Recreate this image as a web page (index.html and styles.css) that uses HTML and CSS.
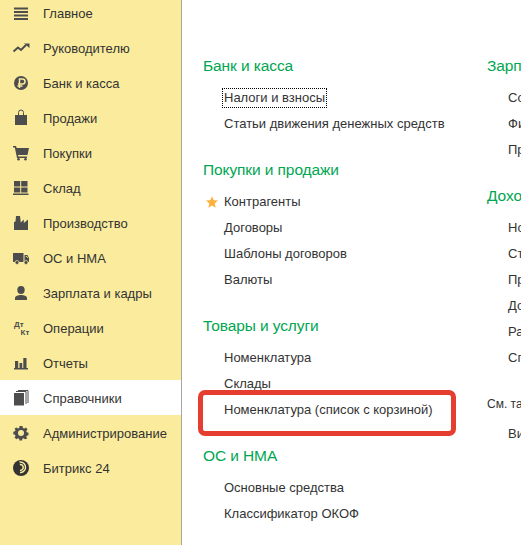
FILE: index.html
```html
<!DOCTYPE html>
<html lang="ru">
<head>
  <meta charset="UTF-8">
  <title>Справочники</title>
  <link rel="stylesheet" href="styles.css">
</head>
<body>
  <div class="page">
    <nav class="sidebar">
      <a class="nav-item">
        <svg class="icon" viewBox="0 0 20 20"><path d="M3 4.500h14v2H3zM3 8h14v2H3zM3 11.500h14v2H3zM3 15h14v2H3z"/></svg>
        <span>Главное</span>
      </a>
      <a class="nav-item">
        <svg class="icon" viewBox="0 0 20 20"><path class="line" d="M2.500 13.500 7 9.500l3 2.500 5-5"/><path d="M13 5.500h5.500V10z"/></svg>
        <span>Руководителю</span>
      </a>
      <a class="nav-item">
        <svg class="icon" viewBox="0 0 20 20"><circle cx="10" cy="10" r="7"/><path class="cut" d="M8.500 15V6h3a2.300 2.300 0 0 1 0 5h-4.500M6.500 13h5"/></svg>
        <span>Банк и касса</span>
      </a>
      <a class="nav-item">
        <svg class="icon" viewBox="0 0 20 20"><path d="M4 7h3V9h1V7h4v2h1V7h3v10H4z"/><path class="line-thin" d="M7.500 9V4.500a2.500 2.500 0 0 1 5 0V9"/></svg>
        <span>Продажи</span>
      </a>
      <a class="nav-item">
        <svg class="icon" viewBox="0 0 20 20"><path d="M2 3h3l.7 2H18l-1.500 7H7l.4 1.500H16V15H6L3.800 4.500H2z"/><circle cx="7.500" cy="16.300" r="1.300"/><circle cx="14.500" cy="16.300" r="1.300"/></svg>
        <span>Покупки</span>
      </a>
      <a class="nav-item">
        <svg class="icon" viewBox="0 0 20 20"><path d="M3 3h6.200v5.500H3zM10.200 3H16.500v5.500h-6.300zM3 9.500h6.200v5H3zM10.200 9.500H16.500v5h-6.300zM2 15.500h15.500V17H2z"/></svg>
        <span>Склад</span>
      </a>
      <a class="nav-item">
        <svg class="icon" viewBox="0 0 20 20"><path d="M3 17V9l1.500-.5L5 3h4l.8 6.500 3-3v3.500l4.200-3.500V17z"/></svg>
        <span>Производство</span>
      </a>
      <a class="nav-item">
        <svg class="icon" viewBox="0 0 20 20"><path d="M2 5h10.500v9H2zM13.500 7h3L18 10v4h-4.500z"/><path class="cut-thin" d="M14.800 8.500h1.200l.8 1.500"/><circle class="wheel" cx="6" cy="14.500" r="2"/><circle class="wheel" cx="15" cy="14.500" r="2"/></svg>
        <span>ОС и НМА</span>
      </a>
      <a class="nav-item">
        <svg class="icon" viewBox="0 0 20 20"><ellipse cx="10" cy="7" rx="3.700" ry="4"/><path d="M4 17v-2c0-2 3-3 6-3s6 1 6 3v2z"/></svg>
        <span>Зарплата и кадры</span>
      </a>
      <a class="nav-item">
        <svg class="icon" viewBox="0 0 20 20"><text class="icon-text" x="3" y="8.500">Дт</text><text class="icon-text" x="9.500" y="16.500">Кт</text></svg>
        <span>Операции</span>
      </a>
      <a class="nav-item">
        <svg class="icon" viewBox="0 0 20 20"><path d="M4 8h3.200v7H4zM8.500 10h2.700v5H8.500zM12.300 5h3.200v10h-3.200zM3 15h14v1.500H3z"/></svg>
        <span>Отчеты</span>
      </a>
      <a class="nav-item active">
        <svg class="icon" viewBox="0 0 20 20"><path d="M3 5h10v12.500H3z"/><path class="line-thin" d="M5 3.500h10v12.500M7 2.500h10v12.500"/></svg>
        <span>Справочники</span>
      </a>
      <a class="nav-item">
        <svg class="icon" viewBox="0 0 20 20"><path fill-rule="evenodd" d="M8.500 3h3l.4 1.900 1.500.6L15 4.500 16.500 6.500l-1.200 1.500.5 1.200 1.700.5v2.600l-1.700.5-.5 1.200 1 1.600L14 16.300l-1.600-1-1 .5-.4 1.700H8.500l-.4-1.700-1.200-.5-1.500 1L3.500 14.600l1-1.600-.5-1.200-1.700-.5V8.700l1.700-.5.5-1.200-1-1.500L5.500 4.500l1.500 1 1.200-.5zM10 7a3 3 0 1 0 0 6 3 3 0 0 0 0-6z"/></svg>
        <span>Администрирование</span>
      </a>
      <a class="nav-item">
        <svg class="icon" viewBox="0 0 20 20"><circle class="bitrix" cx="10" cy="10" r="8"/><path class="swirl" d="M8.500 4c3.500-.5 6.500 2.500 6 6-.4 2.800-3 4.800-5.500 4.500"/><path class="swirl" d="M8.800 6.500c2-.3 3.700 1.300 3.400 3.400-.2 1.500-1.600 2.600-3.100 2.300"/></svg>
        <span>Битрикс 24</span>
      </a>
    </nav>

    <main class="content">
      <div class="column first">
        <section class="group">
          <h2 class="group-title">Банк и касса</h2>
          <a class="link"><span class="focused">Налоги и взносы</span></a>
          <a class="link">Статьи движения денежных средств</a>
        </section>
        <section class="group">
          <h2 class="group-title">Покупки и продажи</h2>
          <a class="link">
            <svg class="star" viewBox="0 0 12 12"><path d="M6 .3 7.700 4.200 12 4.600 8.700 7.400 9.700 11.700 6 9.400 2.300 11.700 3.300 7.400 0 4.600 4.300 4.200z"/></svg>
            Контрагенты
          </a>
          <a class="link">Договоры</a>
          <a class="link">Шаблоны договоров</a>
          <a class="link">Валюты</a>
        </section>
        <section class="group">
          <h2 class="group-title">Товары и услуги</h2>
          <a class="link">Номенклатура</a>
          <a class="link">Склады</a>
          <a class="link">Номенклатура (список с корзиной)</a>
        </section>
        <section class="group">
          <h2 class="group-title">ОС и НМА</h2>
          <a class="link">Основные средства</a>
          <a class="link">Классификатор ОКОФ</a>
        </section>
      </div>
      <div class="column second">
        <section class="group">
          <h2 class="group-title">Зарплата и кадры</h2>
          <a class="link">Сотрудники</a>
          <a class="link">Физические лица</a>
          <a class="link">Прочее</a>
        </section>
        <section class="group">
          <h2 class="group-title">Доходы и расходы</h2>
          <a class="link">Номенклатурные группы</a>
          <a class="link">Статьи затрат</a>
          <a class="link">Прочие доходы и расходы</a>
          <a class="link">Доходы будущих периодов</a>
          <a class="link">Расходы будущих периодов</a>
          <a class="link">Способы учета</a>
        </section>
        <section class="see-also">
          <div class="see-also-title">См. также</div>
          <a class="link">Виды</a>
        </section>
      </div>
      <div class="highlight"></div>
    </main>
  </div>
</body>
</html>
```

FILE: styles.css
```css
html, body {
  margin: 0;
  height: 100%;
  overflow: hidden;
  background: #fff;
}
.page {
  display: flex;
  height: 545px;
  font-family: "Liberation Sans", Arial, sans-serif;
  font-size: 13px;
  color: #333;
}
.sidebar {
  width: 181px;
  flex: none;
  background: #fbec9d;
  border-right: 1px solid #a6a6a6;
  overflow: hidden;
}
.nav-item {
  display: flex;
  align-items: center;
  gap: 12px;
  box-sizing: border-box;
  height: 35px;
  padding: 1px 0 0 11px;
}
.nav-item:first-child {
  margin-top: -5px;
}
.nav-item.active {
  background: #fff;
}
.icon {
  width: 20px;
  height: 20px;
  flex: none;
  fill: #4d4d4d;
}
.line {
  fill: none;
  stroke: #4d4d4d;
  stroke-width: 2;
}
.line-thin {
  fill: none;
  stroke: #4d4d4d;
  stroke-width: 1;
}
.cut {
  fill: none;
  stroke: #fbec9d;
  stroke-width: 1.500;
}
.cut-thin {
  fill: none;
  stroke: #fbec9d;
  stroke-width: .8;
}
.wheel {
  stroke: #fbec9d;
  stroke-width: .7;
}
.icon-text {
  font-size: 8px;
  font-weight: bold;
}
.bitrix {
  fill: #333;
}
.swirl {
  fill: none;
  stroke: #fbec9d;
  stroke-width: 1.500;
}
.content {
  position: relative;
  flex: 1;
  display: flex;
  padding: 55px 0 0 21px;
  min-width: 0;
  overflow: hidden;
}
.column {
  flex: none;
}
.column.first {
  width: 284px;
}
.column.second {
  white-space: nowrap;
}
.group {
  margin-bottom: 22px;
}
.group-title {
  margin: 0 0 7px;
  height: 23px;
  line-height: 22px;
  font-size: 15.500px;
  letter-spacing: -.1px;
  font-weight: normal;
  color: #00a651;
  white-space: nowrap;
}
.link {
  position: relative;
  display: block;
  height: 26px;
  line-height: 26px;
  padding-left: 21px;
  white-space: nowrap;
}
.focused {
  display: inline-block;
  vertical-align: top;
  height: 18px;
  line-height: 18px;
  margin: 3px 0 0 -2px;
  padding: 0 1px;
  border: 1px dotted #000;
}
.star {
  position: absolute;
  left: 3px;
  top: 7px;
  width: 12px;
  height: 12px;
  fill: #fdb03e;
}
.see-also {
  margin-top: 23px;
}
.see-also-title {
  height: 20px;
  line-height: 20px;
  font-size: 12px;
  margin-bottom: 7px;
}
.highlight {
  position: absolute;
  left: 16px;
  top: 390px;
  width: 248px;
  height: 36px;
  border: 5px solid #e53d30;
  border-radius: 7px;
}
```
